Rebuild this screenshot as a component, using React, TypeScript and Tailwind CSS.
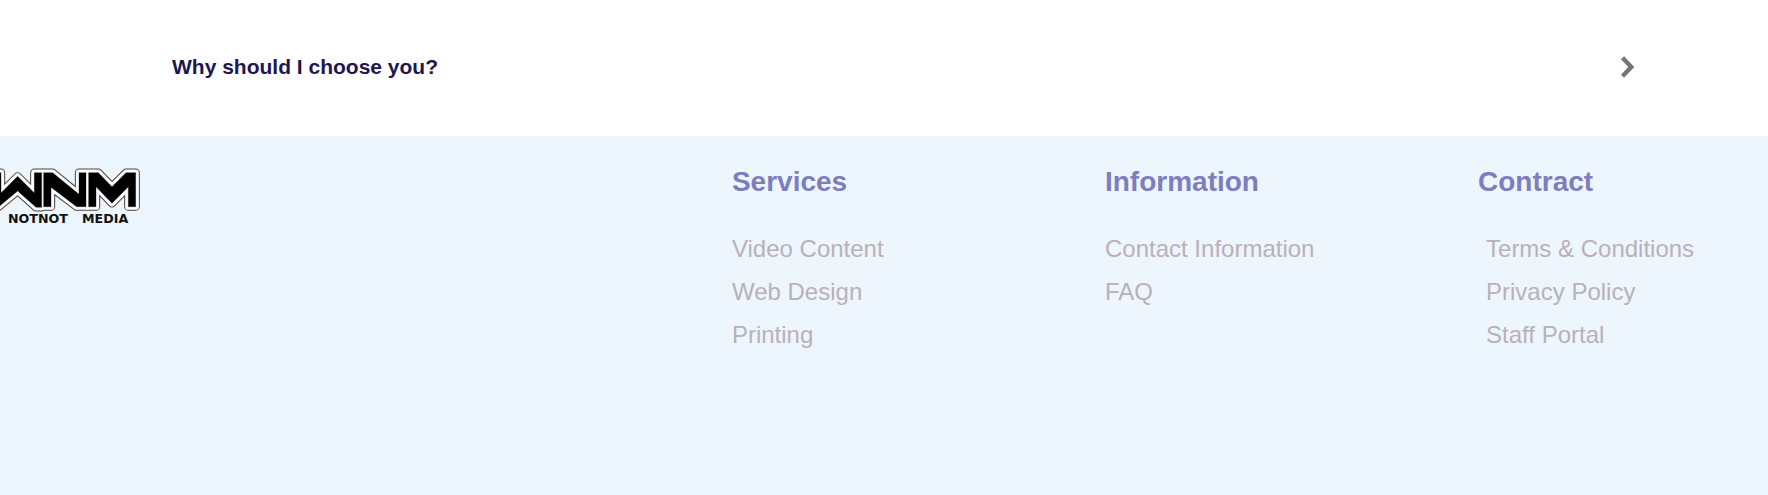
const columns = [
  { title: 'Services', links: ['Video Content', 'Web Design', 'Printing'], indent: '' },
  { title: 'Information', links: ['Contact Information', 'FAQ'], indent: '' },
  { title: 'Contract', links: ['Terms & Conditions', 'Privacy Policy', 'Staff Portal'], indent: 'pl-2' },
];

const marks = [
  '125,68 103,68 103,129 53,79 3,129 3,68 -19,68 -19,172 -6,172 53,123 108,172 125,172',
  '131,68 158,68 237,133 237,68 258,68 258,170 230,170 153,112 153,170 131,170',
  '266,68 295,68 336,110 378,68 407,68 407,170 385,170 385,110 336,160 288,110 288,170 266,170',
];

function Logo() {
  return (
    <svg width="142" height="60" viewBox="0 48 426 180" role="img" aria-label="WNM Notnot Media">
      <g strokeLinejoin="round">
        {marks.map((p) => (
          <polygon key={p} points={p} fill="#444" stroke="#444" strokeWidth="25" />
        ))}
        {marks.map((p) => (
          <polygon key={p} points={p} fill="#fff" stroke="#fff" strokeWidth="19" />
        ))}
        {marks.map((p) => (
          <polygon key={p} points={p} fill="#000" stroke="#000" strokeWidth="1" />
        ))}
      </g>
      <g fontFamily="DejaVu Sans, sans-serif" fontWeight="700" fontSize="38" fill="#111">
        <text x="204" y="220" textAnchor="end">NOTNOT</text>
        <text x="246" y="220">MEDIA</text>
      </g>
    </svg>
  );
}

export default function App() {
  return (
    <div className="flex min-h-screen flex-col overflow-x-hidden bg-white font-['Liberation_Sans',Arial,sans-serif]">
      <section>
        <button
          type="button"
          aria-expanded="false"
          className="flex w-full items-center justify-between pt-[52px] pr-[132px] pb-[54px] pl-[172px] text-left"
        >
          <span className="text-[21px] leading-[30px] font-bold text-[#1d1751]">Why should I choose you?</span>
          <svg width="16" height="24" viewBox="0 0 16 24" fill="none" stroke="#757575" strokeWidth="4.4" aria-hidden="true">
            <path d="M2.5 2.8 11.3 12 2.5 21.2" />
          </svg>
        </button>
      </section>

      <footer className="grid flex-1 grid-cols-[41.4%_21.1%_21.1%_1fr] content-start bg-[#edf6fc] pt-[30px] pb-12">
        <div>
          <Logo />
        </div>
        {columns.map((column) => (
          <nav key={column.title} aria-label={column.title}>
            <h2 className="mb-[29px] text-[28px] leading-8 font-bold text-[#7d7dc0]">{column.title}</h2>
            <ul className={column.indent}>
              {column.links.map((link) => (
                <li key={link} className="text-2xl leading-[43px] whitespace-nowrap text-[#bab0ba]">
                  <a href="#">{link}</a>
                </li>
              ))}
            </ul>
          </nav>
        ))}
      </footer>
    </div>
  );
}
